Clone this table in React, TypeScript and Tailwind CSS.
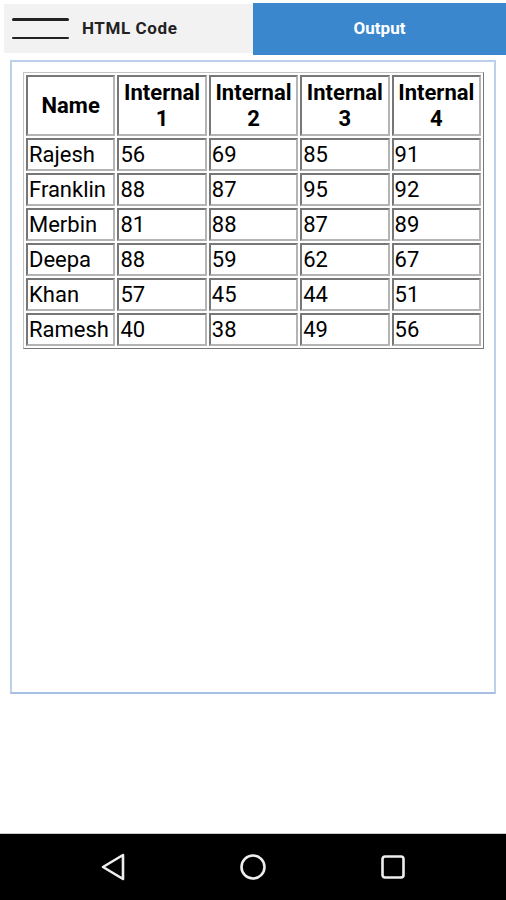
const headers = ["Name", "Internal 1", "Internal 2", "Internal 3", "Internal 4"];

const rows: [string, number, number, number, number][] = [
  ["Rajesh", 56, 69, 85, 91],
  ["Franklin", 88, 87, 95, 92],
  ["Merbin", 81, 88, 87, 89],
  ["Deepa", 88, 59, 62, 67],
  ["Khan", 57, 45, 44, 51],
  ["Ramesh", 40, 38, 49, 56],
];

const cell =
  "border-2 border-t-[#777] border-l-[#777] border-b-[#b4b4b4] border-r-[#b4b4b4] p-0";

function TopBar() {
  return (
    <div className="flex h-[56px] bg-white">
      <div className="mt-1 ml-1 flex h-[49px] w-[249px] items-center bg-[#f2f2f2]">
        <div className="ml-2 flex w-[57px] flex-col gap-[16px]">
          <span className="block h-[2.5px] rounded-full bg-[#222]" />
          <span className="block h-[2.5px] rounded-full bg-[#222]" />
        </div>
        <span className="ml-[13px] text-[17px] font-bold tracking-[0.6px] text-[#222]">
          HTML Code
        </span>
      </div>
      <div className="mt-[3px] flex h-[52px] flex-1 items-center justify-center bg-[#3a87cd] text-[17px] font-bold text-white">
        Output
      </div>
    </div>
  );
}

function MarksTable() {
  return (
    <table className="w-[461px] table-fixed border-separate border-spacing-[2px] border border-t-[#c4c4c4] border-l-[#c4c4c4] border-b-[#777] border-r-[#777] text-[22px] leading-[26px] text-black">
      <thead>
        <tr>
          {headers.map((h) => (
            <th key={h} className={`${cell} h-[61px] px-[2px] text-center font-bold`}>
              {h}
            </th>
          ))}
        </tr>
      </thead>
      <tbody>
        {rows.map((r) => (
          <tr key={r[0]}>
            {r.map((v, i) => (
              <td key={i} className={`${cell} h-[33px] pl-[1px] text-left`}>
                {v}
              </td>
            ))}
          </tr>
        ))}
      </tbody>
    </table>
  );
}

function NavBar() {
  return (
    <div className="flex h-[67px] items-center justify-center border-t border-[#c8c8c8] bg-black">
      <div className="flex w-[140px] justify-center">
        <svg width="28" height="30" viewBox="0 0 28 30" fill="none">
          <path d="M24 3 L4 15 L24 27 Z" stroke="#eee" strokeWidth="2.6" strokeLinejoin="round" />
        </svg>
      </div>
      <div className="flex w-[140px] justify-center">
        <svg width="28" height="28" viewBox="0 0 28 28" fill="none">
          <circle cx="14" cy="14" r="11.5" stroke="#eee" strokeWidth="2.6" />
        </svg>
      </div>
      <div className="flex w-[140px] justify-center">
        <svg width="26" height="26" viewBox="0 0 26 26" fill="none">
          <rect x="2.5" y="2.5" width="21" height="21" rx="2.5" stroke="#eee" strokeWidth="2.6" />
        </svg>
      </div>
    </div>
  );
}

export default function App() {
  return (
    <div className="flex h-[900px] w-[506px] flex-col bg-white font-['Roboto',sans-serif]">
      <TopBar />
      <div className="mx-[10px] mt-[4px] h-[634px] border-2 border-[#bcd0ea] border-b-[#a6bfe2] px-[11px] pt-[10px]">
        <MarksTable />
      </div>
      <div className="flex-1" />
      <NavBar />
    </div>
  );
}
